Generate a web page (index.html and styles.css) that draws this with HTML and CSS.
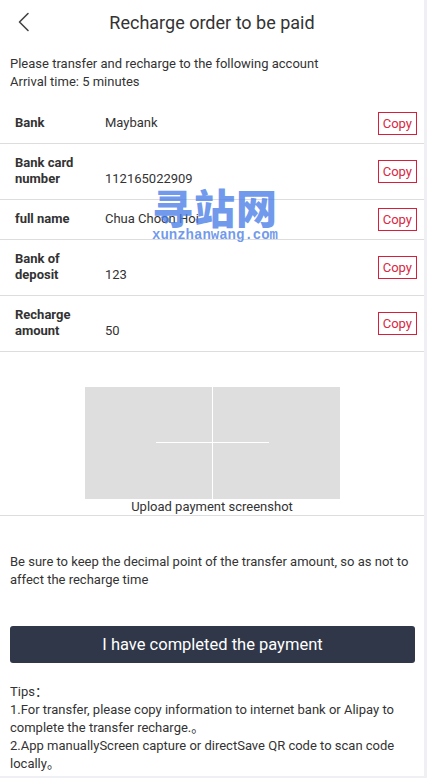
FILE: index.html
```html
<!DOCTYPE html>
<html lang="en">
<head>
<meta charset="utf-8">
<title>Recharge order to be paid</title>
<link rel="stylesheet" href="styles.css">
</head>
<body>
<div class="page">
  <header class="topbar">
    <a class="back" href="#" aria-label="Back">
      <svg width="14" height="20" viewBox="0 0 14 20"><path d="M11 1.5 L2.5 10 L11 18.5" fill="none" stroke="#444" stroke-width="1.6" stroke-linecap="round" stroke-linejoin="round"/></svg>
    </a>
    <h1 class="title">Recharge order to be paid</h1>
  </header>

  <p class="intro">Please transfer and recharge to the following account<br>Arrival time: 5 minutes</p>

  <div class="info">
    <div class="row"><div class="label">Bank</div><div class="value">Maybank</div><button class="copy">Copy</button></div>
    <div class="row"><div class="label">Bank card number</div><div class="value">112165022909</div><button class="copy">Copy</button></div>
    <div class="row"><div class="label">full name</div><div class="value">Chua Choon Hoi</div><button class="copy">Copy</button></div>
    <div class="row"><div class="label">Bank of deposit</div><div class="value">123</div><button class="copy">Copy</button></div>
    <div class="row"><div class="label">Recharge amount</div><div class="value">50</div><button class="copy">Copy</button></div>
  </div>

  <div class="upload">
    <div class="upload-box"><span class="cross-h"></span><span class="cross-v"></span></div>
    <div class="upload-caption">Upload payment screenshot</div>
  </div>

  <p class="notice">Be sure to keep the decimal point of the transfer amount, so as not to affect the recharge time</p>

  <button class="submit">I have completed the payment</button>

  <div class="tips">
    <p>Tips：</p>
    <p>1.For transfer, please copy information to internet bank or Alipay to complete the transfer recharge.。</p>
    <p>2.App manuallyScreen capture or directSave QR code to scan code locally。</p>
    <p>3.After completing the payment, please wait patiently for the account to arrive。</p>
  </div>

  <div class="watermark">
    <div class="wm-cn">寻站网</div>
    <div class="wm-en">xunzhanwang.com</div>
  </div>
</div>
</body>
</html>
```
FILE: styles.css
```css
html, body {
  margin: 0;
  padding: 0;
}
body {
  background: #eef0f4;
  font-family: Roboto, "Noto Sans CJK SC", sans-serif;
  font-size: 13px;
  color: #333;
}
.page {
  position: relative;
  width: 424px;
  height: 776px;
  overflow: hidden;
  background: #fff;
}
.topbar {
  position: relative;
  height: 44px;
  display: flex;
  align-items: center;
  justify-content: center;
}
.back {
  position: absolute;
  left: 17px;
  top: 12px;
  display: block;
  width: 14px;
  height: 20px;
}
.back svg { display: block; }
.title {
  margin: 0;
  font-size: 18px;
  font-weight: 400;
  color: #333;
}
.intro {
  margin: 11px 0 0;
  padding: 0 10px;
  line-height: 18px;
}
.info {
  margin-top: 13px;
}
.row {
  display: flex;
  align-items: stretch;
  border-bottom: 1px solid #ddd;
  line-height: 16px;
}
.label {
  box-sizing: border-box;
  width: 105px;
  padding: 11px 8px 12px 15px;
  font-weight: 700;
  color: #333;
}
.value {
  flex: 1;
  align-self: flex-end;
  padding-bottom: 12px;
}
.copy {
  align-self: center;
  margin: 0 7px 0 0;
  height: 23px;
  padding: 0 4px;
  border: 1px solid #d81e3a;
  border-radius: 0;
  background: #fff;
  color: #d8283f;
  font-family: Roboto, sans-serif;
  font-size: 13px;
  line-height: 21px;
}
.upload {
  padding-top: 35px;
  border-bottom: 1px solid #ddd;
  display: flex;
  flex-direction: column;
  align-items: center;
}
.upload-box {
  position: relative;
  width: 255px;
  height: 112px;
  background: #dedede;
}
.cross-v {
  position: absolute;
  left: 127px;
  top: 0;
  width: 1px;
  height: 100%;
  background: #fff;
}
.cross-h {
  position: absolute;
  left: 71px;
  top: 55px;
  width: 113px;
  height: 1px;
  background: #fff;
}
.upload-caption {
  line-height: 16px;
}
.notice {
  margin: 37px 0 0;
  padding: 0 10px;
  line-height: 18px;
}
.submit {
  display: block;
  box-sizing: border-box;
  width: 405px;
  height: 37px;
  margin: 37px 0 0 10px;
  border: none;
  border-radius: 3px;
  background: #2f3749;
  color: #fff;
  font-family: Roboto, sans-serif;
  font-size: 16.5px;
}
.tips {
  margin-top: 20px;
  padding: 0 10px;
  line-height: 18px;
}
.tips p {
  margin: 0;
}
.watermark {
  position: absolute;
  left: 152px;
  top: 183px;
  color: rgba(74, 126, 232, 0.78);
  text-align: center;
  pointer-events: none;
}
.wm-cn {
  font-family: "Noto Sans CJK SC", sans-serif;
  font-weight: 900;
  font-size: 41px;
  line-height: 46px;
  letter-spacing: 1px;
}
.wm-en {
  font-family: "Liberation Mono", monospace;
  font-weight: 700;
  font-size: 14px;
  line-height: 18px;
  margin-top: -3px;
}
```
